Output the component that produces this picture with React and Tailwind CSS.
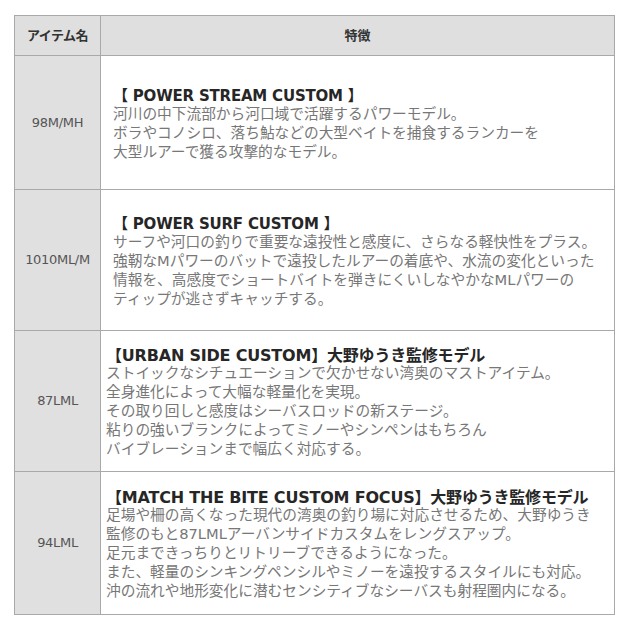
const ROWS = [
  {
    name: '98M/MH',
    h: 'h-[134px]',
    pad: 'pl-[12px]',
    title: '【 POWER STREAM CUSTOM 】',
    big: false,
    lines: [
      '河川の中下流部から河口域で活躍するパワーモデル。',
      'ボラやコノシロ、落ち鮎などの大型ベイトを捕食するランカーを',
      '大型ルアーで獲る攻撃的なモデル。',
    ],
  },
  {
    name: '1010ML/M',
    h: 'h-[141px]',
    pad: 'pl-[12px]',
    title: '【 POWER SURF CUSTOM 】',
    big: false,
    lines: [
      'サーフや河口の釣りで重要な遠投性と感度に、さらなる軽快性をプラス。',
      '強靭なMパワーのバットで遠投したルアーの着底や、水流の変化といった',
      '情報を、高感度でショートバイトを弾きにくいしなやかなMLパワーの',
      'ティップが逃さずキャッチする。',
    ],
  },
  {
    name: '87LML',
    h: 'h-[141px]',
    pad: 'pl-[5px]',
    title: '【URBAN SIDE CUSTOM】大野ゆうき監修モデル',
    big: true,
    lines: [
      'ストイックなシチュエーションで欠かせない湾奥のマストアイテム。',
      '全身進化によって大幅な軽量化を実現。',
      'その取り回しと感度はシーバスロッドの新ステージ。',
      '粘りの強いブランクによってミノーやシンペンはもちろん',
      'バイブレーションまで幅広く対応する。',
    ],
  },
  {
    name: '94LML',
    h: 'h-[143px]',
    pad: 'pl-[5px]',
    title: '【MATCH THE BITE CUSTOM FOCUS】大野ゆうき監修モデル',
    big: true,
    lines: [
      '足場や柵の高くなった現代の湾奥の釣り場に対応させるため、大野ゆうき',
      '監修のもと87LMLアーバンサイドカスタムをレングスアップ。',
      '足元まできっちりとリトリーブできるようになった。',
      'また、軽量のシンキングペンシルやミノーを遠投するスタイルにも対応。',
      '沖の流れや地形変化に潜むセンシティブなシーバスも射程圏内になる。',
    ],
  },
];

export default function App() {
  return (
    <div className="w-[630px] h-[630px] bg-white pt-[15px] pl-[14px] font-['DejaVu_Sans','Noto_Sans_CJK_JP',sans-serif]">
      <table className="w-[601px] table-fixed border-collapse border border-[#a9a9a9]">
        <colgroup>
          <col className="w-[86px]" />
          <col />
        </colgroup>
        <thead>
          <tr className="h-[40px] bg-[#dfdfdf]">
            <th className="border border-[#a9a9a9] text-[13px] font-bold text-[#333] tracking-[-0.5px]">アイテム名</th>
            <th className="border border-[#a9a9a9] text-[13px] font-bold text-[#333]">特徴</th>
          </tr>
        </thead>
        <tbody>
          {ROWS.map((r) => (
            <tr key={r.name} className={r.h}>
              <td className="border border-[#a9a9a9] bg-[#e0e0e0] text-center text-[13px] text-[#555] tracking-[-0.3px]">
                {r.name}
              </td>
              <td className={`border border-[#a9a9a9] align-middle pt-[2px] ${r.pad}`}>
                <div
                  className={
                    r.big
                      ? 'mb-[-2px] text-[16px] leading-[19px] font-bold text-[#262626] tracking-[-0.2px]'
                      : 'mb-[-2px] text-[15px] leading-[19px] font-bold text-[#262626] tracking-[-0.2px]'
                  }
                >
                  {r.title}
                </div>
                {r.lines.map((l) => (
                  <div key={l} className="text-[14.7px] leading-[19px] text-[#777] whitespace-nowrap">
                    {l}
                  </div>
                ))}
              </td>
            </tr>
          ))}
        </tbody>
      </table>
    </div>
  );
}
